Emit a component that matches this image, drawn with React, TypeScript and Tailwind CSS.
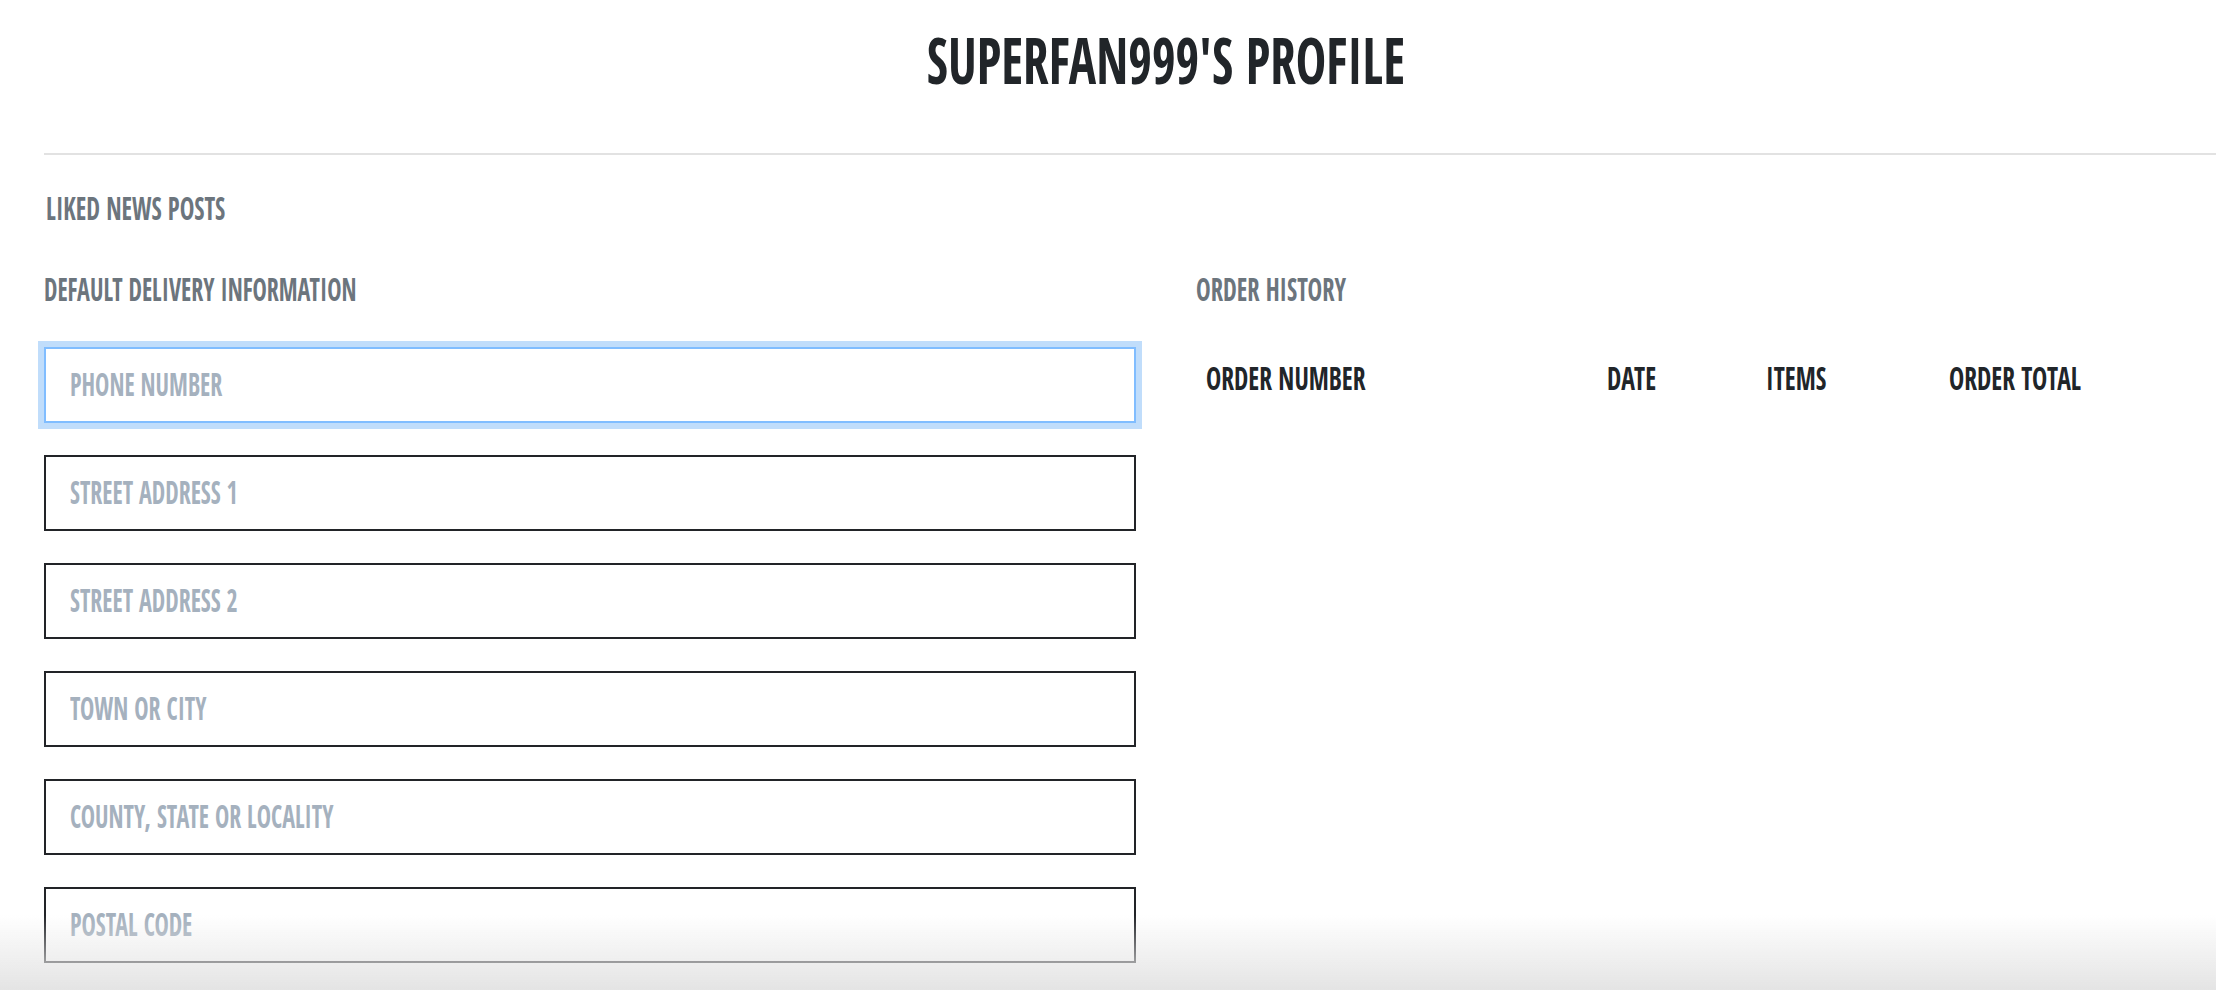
const fields = [
  'Phone Number',
  'Street Address 1',
  'Street Address 2',
  'Town or City',
  'County, State or Locality',
  'Postal Code',
];

function Field({ label, focused }: { label: string; focused?: boolean }) {
  return (
    <div
      className={
        'relative h-[76px] border-2 bg-white ' +
        (focused
          ? 'border-[#80bdff] shadow-[0_0_0_6px_#c0ddfb]'
          : 'border-[#222428]')
      }
    >
      <input
        aria-label={label}
        className="absolute inset-0 h-full w-full bg-transparent outline-none"
      />
      <span className="pointer-events-none absolute left-[24px] top-[19px] inline-block origin-left scale-x-[0.75] text-[32px] font-bold uppercase leading-8 text-[#a5b1be] whitespace-nowrap">
        {label}
      </span>
    </div>
  );
}

export default function App() {
  return (
    <div className="relative min-h-screen overflow-hidden bg-white font-['Open_Sans_Condensed','Roboto_Condensed','Liberation_Sans',sans-serif] font-bold">
      <div className="ml-[44px] w-[2244px] pt-[28px] text-center">
        <h1 className="inline-block origin-center scale-x-[0.8] text-[64px] leading-[64px] font-bold uppercase text-[#212529] whitespace-nowrap">
          superfan999's profile
        </h1>
      </div>
      <div className="ml-[44px] mt-[61px] h-[2px] bg-[#e2e2e2]" />

      <div className="ml-[46px] mt-[37px]">
        <h2 className="inline-block origin-left scale-x-[0.77] text-[32px] leading-8 uppercase text-[#6c757d] whitespace-nowrap">
          Liked News Posts
        </h2>
      </div>

      <div className="ml-[44px] mt-[47px] grid grid-cols-[1092px_1fr] gap-x-[60px]">
        <section>
          <h2 className="inline-block origin-left scale-x-[0.75] text-[32px] leading-8 uppercase text-[#6c757d] whitespace-nowrap">
            Default Delivery Information
          </h2>
          <form className="mt-[40px] flex flex-col gap-[32px]">
            {fields.map((f, i) => (
              <Field key={f} label={f} focused={i === 0} />
            ))}
          </form>
        </section>

        <section>
          <h2 className="inline-block origin-left scale-x-[0.77] text-[32px] leading-8 uppercase text-[#6c757d] whitespace-nowrap">
            Order History
          </h2>
          <div className="mt-[55px] grid grid-cols-[401px_159px_183px_1fr] pl-[10px] text-[32px] leading-8 uppercase text-[#212529]">
            {['Order Number', 'Date', 'Items', 'Order Total'].map((h) => (
              <div key={h}>
                <span className="inline-block origin-left scale-x-[0.8] whitespace-nowrap">{h}</span>
              </div>
            ))}
          </div>
        </section>
      </div>

      <div className="pointer-events-none fixed inset-x-0 bottom-0 h-[75px] bg-linear-to-b from-white/0 to-[#e4e4e4]" />
    </div>
  );
}
